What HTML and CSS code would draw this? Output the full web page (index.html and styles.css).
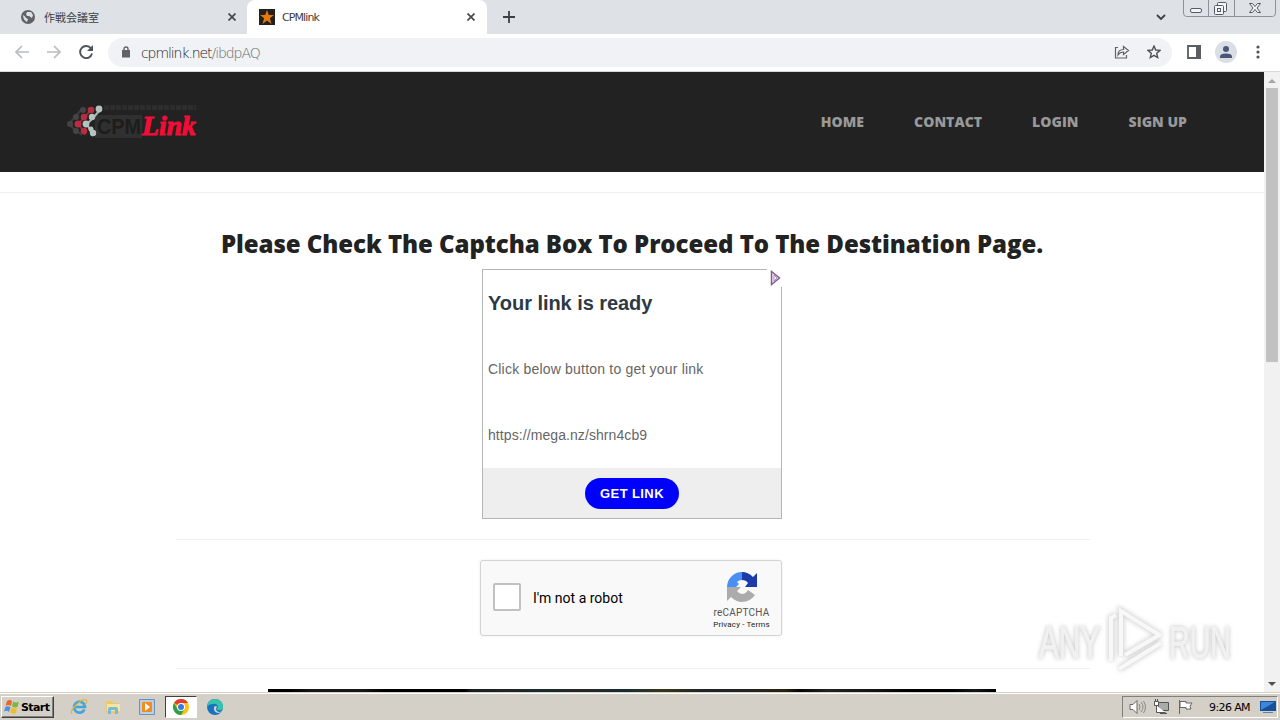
FILE: index.html
```html
<!DOCTYPE html>
<html lang="en">
<head>
    <meta charset="UTF-8">
    <meta name="viewport" content="width=device-width, initial-scale=1.0">
    <title>CPMlink</title>
    <link rel="stylesheet" href="styles.css">
</head>
<body>
    <!-- Tabs -->
    <div class="tabs">
        <div class="tab">
            <svg width="14" height="14" viewBox="0 0 14 14"><circle cx="7" cy="7" r="7" fill="#5f6368"/><path d="M2 5q2 1 3 3l2 1-1 3Q2 10 2 5zM6 2l4 0 2 3-1 3-3-2-2 0-1-2z" fill="#dee1e6"/></svg>
            <span class="tab-title jp">作戦会議室</span>
            <svg class="close" width="8" height="8" viewBox="0 0 8 8"><path d="M.5.5l7 7M7.5.5l-7 7" stroke="#45494d" stroke-width="1.7"/></svg>
        </div>
        <div class="tab active">
            <svg width="16" height="16" viewBox="0 0 16 16"><path d="M0 0h16v16H0z" fill="#24201e"/><path d="M8 1l1.8 5H15l-4.1 3.2L12.500 15 8 11.500 3.500 15l1.600-5.800L1 6h5.200z" fill="#e07b0c"/></svg>
            <span class="tab-title">CPMlink</span>
            <svg class="close" width="8" height="8" viewBox="0 0 8 8"><path d="M.5.5l7 7M7.500.5l-7 7" stroke="#45494d" stroke-width="1.7"/></svg>
        </div>
        <svg class="new-tab" width="12" height="12" viewBox="0 0 12 12"><path d="M6 0v12M0 6h12" stroke="#3c4043" stroke-width="1.8"/></svg>
        <svg class="tab-search" width="10" height="7" viewBox="0 0 10 7"><path d="M1 1l4 4 4-4" fill="none" stroke="#3c4043" stroke-width="1.8"/></svg>
        <svg class="window-buttons" width="94" height="17" viewBox="0 0 94 17">
            <path d="M.5 0v13q0 3.500 3 3.500h86q3 0 3-3.500V0M25.500 0v16M51.500 0v16" fill="none" stroke="#8d9199"/>
            <g fill="#f4f5f7" stroke="#555a63">
                <rect x="7.500" y="8.500" width="11" height="4" rx="1.500"/>
                <rect x="34.500" y="2.500" width="9" height="9" rx="1"/>
                <rect x="31.500" y="5.500" width="9" height="9" rx="1"/>
                <rect x="34.500" y="8.500" width="3" height="3"/>
                <path d="M66.500 3.500h3l2.500 3 2.500-3h3L74 8l3.500 4.500h-3L72 9.500l-2.500 3h-3L70 8z"/>
            </g>
        </svg>
    </div>

    <!-- Address bar -->
    <div class="toolbar">
        <svg width="14" height="14" viewBox="0 0 14 14"><path d="M14 7H1.500M7 1L1 7l6 6" fill="none" stroke="#babcbe" stroke-width="1.700"/></svg>
        <svg width="14" height="14" viewBox="0 0 14 14"><path d="M0 7h12.500M7 1l6 6-6 6" fill="none" stroke="#babcbe" stroke-width="1.700"/></svg>
        <svg width="14" height="14" viewBox="0 0 14 14"><path d="M12 3.500A6 6 0 1 0 13 8.500" fill="none" stroke="#505458" stroke-width="1.900"/><path d="M14 0v6H8z" fill="#505458"/></svg>
        <div class="address">
            <svg width="8" height="12" viewBox="0 0 8 12"><path d="M0 4h8v7.500H0z" fill="#5f6368"/><path d="M2 4.500V3a2 2 0 0 1 4 0v1.500" fill="none" stroke="#5f6368" stroke-width="1.400"/></svg>
            <span class="url">cpmlink.net<span class="path">/ibdpAQ</span></span>
            <svg class="share" width="16" height="14" viewBox="0 0 16 14"><path d="M4 2.500H1.500v10.500H12.500V10M4 10q0-5.500 5.500-5.500V1.500l5 4-5 4V7Q6 7 4 10z" fill="none" stroke="#5f6368" stroke-width="1.200"/></svg>
            <svg width="14" height="14" viewBox="0 0 14 14"><path d="M7 1l1.700 4 4.300.4-3.300 2.900 1 4.200L7 10.300l-3.700 2.200 1-4.200L1 5.400 5.300 5z" fill="none" stroke="#4d5156" stroke-width="1.400"/></svg>
        </div>
        <svg class="panel" width="14" height="14" viewBox="0 0 14 14"><path d="M1 1h12v12H1z" fill="#fff" stroke="#5a5d62" stroke-width="1.800"/><path d="M9 0h5v14H9z" fill="#5a5d62"/></svg>
        <svg class="avatar" width="22" height="22" viewBox="0 0 22 22"><circle cx="11" cy="11" r="11" fill="#dadfe5"/><circle cx="11" cy="8" r="3" fill="#4b5875"/><path d="M5 17v-1.500q0-3 6-3t6 3V17z" fill="#4b5875"/></svg>
        <svg class="dots" width="4" height="14" viewBox="0 0 4 14" fill="#505458"><circle cx="2" cy="2" r="1.600"/><circle cx="2" cy="7" r="1.600"/><circle cx="2" cy="12" r="1.600"/></svg>
    </div>

    <div class="view">
        <div class="page">
            <header class="header">
                <!-- Logo -->
                <svg class="logo" width="136" height="40" viewBox="0 0 136 40">
                    <path d="M38 5.500h92" stroke="#2d2d2d" stroke-width="5" stroke-dasharray="5 1"/>
                    <path d="M29 13h47v23H29z" fill="#303030"/>
                    <text class="logo-cpm" x="31" y="32" textLength="44" lengthAdjust="spacingAndGlyphs">CPM</text>
                    <g stroke-width="2" fill="none">
                        <path d="M15 8l-7 8-5 6 5 5 8 6" stroke="#3c3c3c"/>
                        <path d="M25 8l-8 9-5 5 5 6 2 5" stroke="#8c2b3a"/>
                        <path d="M34 8l-7 8-6 6 6 12" stroke="#a9b4b3"/>
                    </g>
                    <g fill="#444"><circle cx="17" cy="8" r="3"/><circle cx="10" cy="15" r="3"/><circle cx="4" cy="22" r="3"/><circle cx="10" cy="29" r="3"/></g>
                    <g fill="#b82d42"><circle cx="25" cy="8" r="3.300"/><circle cx="18" cy="15" r="3.300"/><circle cx="12" cy="22" r="3.500"/><circle cx="18" cy="29" r="3.300"/></g>
                    <g fill="#b5c2c0"><circle cx="33" cy="7" r="3.400"/><circle cx="26" cy="15" r="3.200"/><circle cx="20" cy="22" r="3.400"/><circle cx="27" cy="31" r="3.200"/><circle cx="25" cy="27" r="2.500"/></g>
                    <text class="logo-link" x="76" y="33" textLength="54" lengthAdjust="spacingAndGlyphs">Link</text>
                </svg>
                <nav class="nav">
                    <a>HOME</a>
                    <a>CONTACT</a>
                    <a>LOGIN</a>
                    <a>SIGN UP</a>
                </nav>
            </header>
            <hr class="top-line">
            <h1 class="title">Please Check The Captcha Box To Proceed To The Destination Page.</h1>

            <div class="ad">
                <h2 class="ad-title">Your link is ready</h2>
                <p class="ad-text">Click below button to get your link</p>
                <p class="ad-text ad-url">https://mega.nz/shrn4cb9</p>
                <div class="ad-footer"><a class="ad-button">GET LINK</a></div>
                <div class="ad-choices">
                    <svg width="11" height="16" viewBox="0 0 11 16"><path d="M1.500 1.500v13l8-6.500z" fill="#f1e4f6" stroke="#80618c" stroke-width="1.500"/><path d="M4 5v6l3-3z" fill="#fff" stroke="#b58bc6"/></svg>
                </div>
            </div>
            <hr class="line">

            <div class="captcha">
                <div class="checkbox"></div>
                <span class="captcha-label">I'm not a robot</span>
                <div class="captcha-brand">
                    <svg width="32" height="32" viewBox="0 0 32 32">
                        <path d="M1 16A15 15 0 0 1 16 1v8q-3 0-5 2l2 2-3 3z" fill="#4a90f4"/>
                        <path d="M16 1q6 0 11 5l4-4v14H19l3-4q-2-3-6-3z" fill="#1c3aa9"/>
                        <path d="M1 16v14l4-4q5 5 11 5 8 0 13-7l-7-5q-2 4-6 4-3 0-5-3l4-4z" fill="#ababab"/>
                    </svg>
                    <span class="brand-name">reCAPTCHA</span>
                    <span class="brand-links">Privacy - Terms</span>
                </div>
            </div>
            <hr class="line line-last">
            <div class="banner"></div>

            <div class="watermark">
                <svg width="208" height="72" viewBox="0 0 208 72">
                    <text x="6" y="54" textLength="61" lengthAdjust="spacingAndGlyphs">ANY</text>
                    <text x="136" y="54" textLength="62" lengthAdjust="spacingAndGlyphs">RUN</text>
                    <path class="mark-shadow" d="M88 52V7l40 25M78 57V14l5-3M92 51l36-21M86 65l42-26"/>
                    <path class="mark-face" d="M88 52V7l40 25M78 57V14l5-3M92 51l36-21M86 65l42-26"/>
                </svg>
            </div>
        </div>
        <div class="scrollbar">
            <svg width="8" height="4" viewBox="0 0 8 4"><path d="M4 0l4 4H0z" fill="#a3a3a3"/></svg>
            <div class="thumb"></div>
            <svg class="down" width="8" height="4" viewBox="0 0 8 4"><path d="M0 0h8L4 4z" fill="#505050"/></svg>
        </div>
    </div>

    <!-- Taskbar -->
    <div class="taskbar">
        <div class="start">
            <svg width="16" height="16" viewBox="0 0 16 16"><path d="M3 2q3-2 5 0L7 7Q4 5 1.500 7z" fill="#ed632c"/><path d="M9 2.500q3 2 6 0L13.500 8q-3 1-5.500-.5z" fill="#78b943"/><path d="M1.300 8q2.700-1.500 5.200.2L5 13q-2-2-5-.5z" fill="#4594dc"/><path d="M7.700 8.500q3 1.600 5.500.6L12 14q-3 1.500-5.700-.5z" fill="#f3bd25"/></svg>
            <span>Start</span>
        </div>
        <div class="task">
            <svg width="18" height="18" viewBox="0 0 18 18"><path d="M14.500 11.500A5.500 5.500 0 1 1 15 9H5" fill="none" stroke="#42a5dc" stroke-width="2.700"/><path d="M2 16C-1 12 12 0 16 2q2 1-1 5" fill="none" stroke="#dfb53c" stroke-width="1.200"/></svg>
        </div>
        <div class="task">
            <svg width="18" height="18" viewBox="0 0 18 18"><path d="M2 3h6l1 2h6v10H2z" fill="#eac96a"/><path d="M3 6h13v7H3z" fill="#f7e6a2"/><path d="M4 16v-5q0-2 2-2h6q2 0 2 2v5h-3v-4H7v4z" fill="#78bad9"/></svg>
        </div>
        <div class="task">
            <svg width="16" height="16" viewBox="0 0 16 16"><path d="M.5.5h15v15H.5z" fill="#b6d0e7" stroke="#6e91b5"/><path d="M3 4q0-1 1-1h8q1 0 1 1v8q0 1-1 1H4q-1 0-1-1z" fill="#f58a1f"/><path d="M6 4l5 4-5 4z" fill="#fff"/></svg>
        </div>
        <div class="task running">
            <svg width="16" height="16" viewBox="0 0 16 16"><circle cx="8" cy="8" r="8" fill="#fbc116"/><path d="M8 8L1.070 4A8 8 0 0 1 14.930 4H8z" fill="#e33b2e"/><path d="M1.070 4A8 8 0 0 0 8 16l3.500-6L8 8 4.500 10z" fill="#2da04c"/><circle cx="8" cy="8" r="4" fill="#fff"/><circle cx="8" cy="8" r="3" fill="#3b78e7"/></svg>
        </div>
        <div class="task">
            <svg width="16" height="16" viewBox="0 0 16 16"><circle cx="8" cy="8" r="8" fill="#1673c1"/><path d="M0 8A8 8 0 0 1 16 8q0 4-5 3-2-1 0-3-1-4-5-3-4 0-6 3z" fill="#35c5aa"/><path d="M7 8q-1 5 4 6 3 0 4-2-3 2-5 0-2-2 0-4-1-2-3 0z" fill="#d4d0c8"/></svg>
        </div>
        <div class="tray">
            <svg width="17" height="16" viewBox="0 0 17 16" fill="none" stroke="#666"><path d="M1 5.500h3l4-4v13l-4-4H1z" fill="#fff"/><path d="M10 5q2 3 0 6M12 3q4 5 0 10M14.500 2q4 6 0 12" stroke="#888"/></svg>
            <svg width="17" height="16" viewBox="0 0 17 16" fill="#fff" stroke="#555"><path d="M5.500 3.500h10v8h-10z" fill="#aaa"/><path d="M1.500 2.500h4v4h-4zM2.500 0v2M4.500 0v2M3.500 6.500v7h9M7 14.500h7" /></svg>
            <svg width="17" height="16" viewBox="0 0 17 16" fill="#fff" stroke="#666"><path d="M2.500 1v14M3 2.500h6v1.500h6l-2 3 1 3H9V8.500H3z"/></svg>
            <span class="clock">9:26 AM</span>
            <svg width="16" height="14" viewBox="0 0 16 14"><path d="M0 1h16v10H0z" fill="#174f9f"/><path d="M1 2h14L1 10z" fill="#3f86d8"/><path d="M3 12h10v1H3z" fill="#6280a2"/></svg>
        </div>
    </div>
</body>
</html>
```
FILE: styles.css
```css
* {
    box-sizing: border-box;
}
body {
    margin: 0;
    width: 1280px;
    height: 720px;
    overflow: hidden;
    display: flex;
    flex-direction: column;
    background-color: #fff;
    font-family: "Liberation Sans", Arial, sans-serif;
}
svg {
    display: block;
    flex: none;
}

/* browser */
.tabs {
    height: 34px;
    display: flex;
    align-items: center;
    background-color: #dee1e6;
}
.tab {
    width: 247px;
    height: 34px;
    padding: 0 11px 0 21px;
    display: flex;
    align-items: center;
}
.tab.active {
    width: 240px;
    padding: 0 12px;
    background-color: #fff;
    border-radius: 8px 8px 0 0;
}
.tab-title {
    margin-left: 7px;
    flex: 1;
    font: 11px "DejaVu Sans", sans-serif;
    letter-spacing: -0.9px;
    color: #3c4043;
}
.tab-title.jp {
    margin-left: 9px;
    font: 11px "Noto Sans CJK JP", sans-serif;
    letter-spacing: 0;
}
.new-tab {
    margin-left: 16px;
}
.tab-search {
    margin-left: auto;
}
.window-buttons {
    margin: 0 3px 0 17px;
    align-self: flex-start;
}
.toolbar {
    height: 38px;
    padding: 0 19px 1px 15px;
    display: flex;
    align-items: center;
    gap: 18px;
    border-bottom: 1px solid #d5d7da;
}
.address {
    width: 1064px;
    height: 29px;
    margin-left: -3px;
    padding: 0 11px 0 14px;
    display: flex;
    align-items: center;
    border-radius: 15px;
    background-color: #f0f2f5;
}
.url {
    margin-left: 11px;
    padding-top: 1px;
    flex: 1;
    font: 14px "DejaVu Sans", sans-serif;
    font-weight: 200;
    letter-spacing: -1.08px;
    color: #202124;
}
.url .path {
    color: #686c70;
}
.share {
    margin-right: 17px;
}
.panel {
    margin-left: -3px;
}
.avatar {
    margin-left: -4px;
}
.dots {
    margin-left: 1px;
}

.view {
    height: 620px;
    display: flex;
}
.page {
    position: relative;
    width: 1264px;
    overflow: hidden;
}
.scrollbar {
    width: 16px;
    padding: 7px 0 6px;
    display: flex;
    flex-direction: column;
    align-items: center;
    background-color: #f1f1f1;
}
.thumb {
    width: 12px;
    height: 274px;
    margin-top: 5px;
    background-color: #c1c1c1;
}
.down {
    margin-top: auto;
}

/* site header */
.header {
    height: 100px;
    padding: 0 77px 0 66px;
    display: flex;
    align-items: center;
    justify-content: space-between;
    background-color: #222;
}
.logo-cpm {
    font: bold 22px "Liberation Sans", sans-serif;
    fill: #1d1d1d;
}
.logo-link {
    font: italic bold 27px "Liberation Serif", serif;
    fill: #f20d36;
    stroke: #f20d36;
    stroke-width: 1px;
    stroke-linejoin: round;
}
.nav {
    padding-bottom: 2px;
    display: flex;
    gap: 50px;
}
.nav a {
    font: 800 14px "Open Sans", sans-serif;
    letter-spacing: 0.05px;
    color: #999;
}
hr {
    height: 1px;
    border: 0;
    background-color: #eee;
}
.top-line {
    margin: 20px 0 0;
}
.title {
    margin: 34px 0 0;
    font: 800 24px/34px "Open Sans", sans-serif;
    letter-spacing: -0.05px;
    text-align: center;
    color: #222;
}

/* ad box */
.ad {
    position: relative;
    width: 300px;
    height: 250px;
    margin: 8px auto 0;
    display: flex;
    flex-direction: column;
    border: 1px solid #b5b5b5;
    color: #333;
}
.ad-title {
    margin: 21px 0 0 5px;
    font-size: 20px;
    line-height: 24px;
    letter-spacing: -0.05px;
    color: #2d3a45;
}
.ad-text {
    margin: 44px 0 0 5px;
    font-size: 14px;
    line-height: 20px;
    letter-spacing: 0.2px;
    color: #666;
}
.ad-url {
    margin-top: 46px;
    letter-spacing: 0.08px;
}
.ad-footer {
    height: 50px;
    margin-top: auto;
    display: flex;
    align-items: center;
    justify-content: center;
    background-color: #eee;
}
.ad-button {
    width: 94px;
    height: 31px;
    border-radius: 16px;
    background-color: #00f;
    font-size: 13px;
    font-weight: bold;
    line-height: 31px;
    letter-spacing: 0.4px;
    text-align: center;
    color: #fff;
}
.ad-choices {
    position: absolute;
    top: -1px;
    right: -1px;
    width: 15px;
    height: 18px;
    padding: 1px 0 0 3px;
    background-color: #fff;
}
.line {
    width: 914px;
    margin: 20px 0 20px 176px;
}
.line-last {
    margin-top: 32px;
}

/* captcha */
.captcha {
    width: 302px;
    height: 76px;
    margin-left: 480px;
    padding: 0 11px 0 12px;
    display: flex;
    align-items: center;
    border: 1px solid #d3d3d3;
    border-radius: 3px;
    background-color: #f9f9f9;
    box-shadow: 0 0 3px rgba(0, 0, 0, 0.08);
}
.checkbox {
    width: 28px;
    height: 28px;
    margin-bottom: 2px;
    border: 2px solid #c1c1c1;
    border-radius: 2px;
    background-color: #fff;
}
.captcha-label {
    margin-left: 12px;
    flex: 1;
    font: 14px Roboto, sans-serif;
    color: #000;
}
.captcha-brand {
    display: flex;
    flex-direction: column;
    align-items: center;
    width: 57px;
    padding-top: 3px;
    color: #555;
}
.brand-name {
    margin-top: 5px;
    font: 10px/10px Roboto, sans-serif;
    letter-spacing: 0.2px;
}
.brand-links {
    margin-top: 3px;
    font: 8px/8px Roboto, sans-serif;
    letter-spacing: 0.15px;
    white-space: nowrap;
    color: #222;
}
.banner {
    width: 728px;
    height: 3px;
    margin: 0 auto;
    background: linear-gradient(to right, #000 0 3%, #171717 6% 13%, #000 16% 27%, #17211f 28%, #222 32%, #182d30 37%, #292726 43%, #172d32 49%, #37351c 54%, #1f2427 60%, #252320 66%, #2a2115 71%, #050505 73%, #222 77%, #111 84%, #000 88% 94%, #10181a 97%, #000);
}

/* watermark lies over the page */
.watermark {
    position: absolute;
    right: 23px;
    bottom: 16px;
}
.watermark text {
    font: 45px "Liberation Sans", sans-serif;
    fill: #f1f1f1;
    stroke: #f1f1f1;
    stroke-width: 1px;
    filter: drop-shadow(0 0 2px rgba(0, 0, 0, 0.25));
}
.mark-shadow {
    fill: none;
    stroke: #d8d8d8;
    stroke-width: 7px;
    filter: blur(2px);
}
.mark-face {
    fill: none;
    stroke: #f8f8f8;
    stroke-width: 4px;
}

/* taskbar */
.taskbar {
    height: 28px;
    padding: 2px 2px 1px 0;
    display: flex;
    align-items: center;
    border-top: 1px solid #d4d0c8;
    background-color: #d4d0c8;
    box-shadow: inset 0 1px #fff;
}
.start {
    width: 53px;
    height: 22px;
    margin: 0 9px 0 1px;
    padding-left: 2px;
    display: flex;
    align-items: center;
    gap: 1px;
    border: 1px solid;
    border-color: #fff #404040 #404040 #fff;
    box-shadow: inset -1px -1px #808080;
    font: bold 11px "DejaVu Sans", sans-serif;
    letter-spacing: -0.6px;
    color: #000;
}
.task {
    width: 32px;
    height: 22px;
    margin-right: 2px;
    display: flex;
    align-items: center;
    justify-content: center;
}
.task.running {
    border: 1px solid;
    border-color: #404040 #fff #fff #404040;
    background-color: #fff;
}
.tray {
    width: 156px;
    height: 22px;
    margin-left: auto;
    padding: 0 1px 0 6px;
    display: flex;
    align-items: center;
    gap: 7px;
    border: 1px solid;
    border-color: #808080 #fff #fff #808080;
}
.clock {
    margin: 0 3px 0 auto;
    font: 11px "DejaVu Sans", sans-serif;
    letter-spacing: -0.6px;
    white-space: nowrap;
    color: #000;
}
```
